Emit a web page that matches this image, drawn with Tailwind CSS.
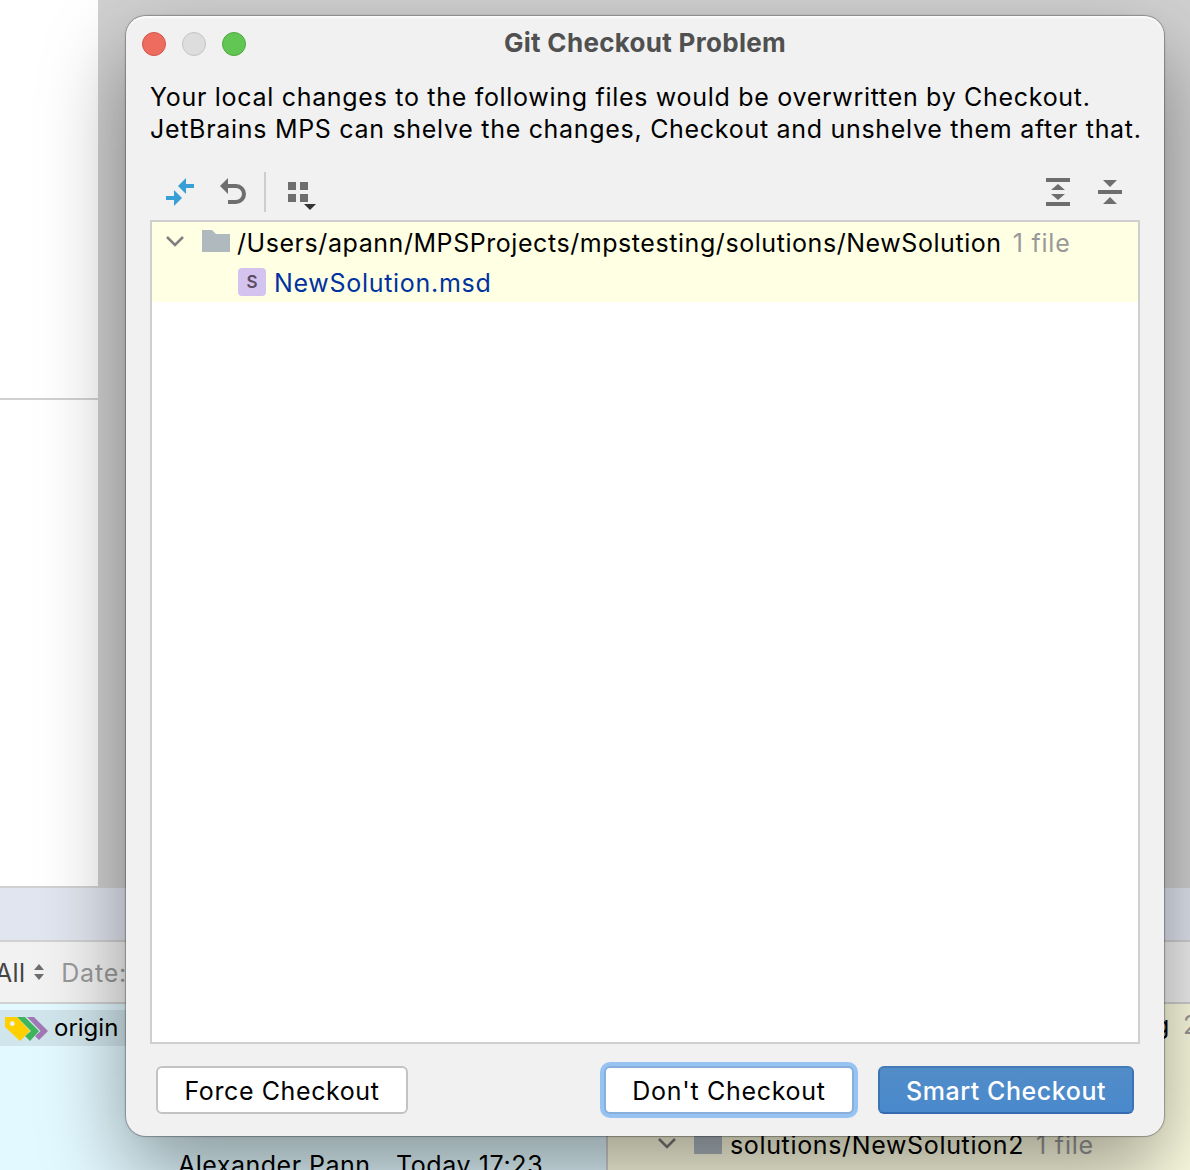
<!DOCTYPE html>
<html lang="en">
<head>
<meta charset="utf-8">
<title>Git Checkout Problem</title>
<script src="https://cdn.jsdelivr.net/npm/@tailwindcss/browser@4"></script>
</head>
<body class="relative h-[1170px] w-[1190px] overflow-hidden bg-[#d1d1d1] font-[Inter,sans-serif] text-[25px] leading-8 whitespace-nowrap text-black">
  <!-- IDE window behind the dialog -->
  <div class="flex h-[1170px] flex-col">
    <div class="flex h-[886px] w-[98px] shrink-0 flex-col gap-[2px] bg-[#d1d1d1]">
      <div class="h-[398px] bg-white"></div>
      <div class="flex-1 bg-white"></div>
    </div>
    <div class="h-[54px] shrink-0 border-t-2 border-[#d1d1d1] bg-[#e1e5ef]"></div>
    <div class="flex h-16 shrink-0 items-center border-y-2 border-[#d1d1d1] bg-[#f2f2f2] pt-[2px]">
      <span class="-ml-[5px] tracking-[0.3px] text-[#444]">All</span>
      <svg class="mb-[2px] ml-[9px] h-4 w-[10px]" viewBox="0 0 10 16" fill="#6e6e6e"><path d="M5 0l5 6H0zM0 10h10l-5 6z"/></svg>
      <span class="ml-[17px] tracking-[0.8px] text-[#999]">Date:</span>
    </div>
    <div class="flex flex-1">
      <div class="w-[606px] bg-[#e2f9ff] pt-[6px]">
        <div class="flex h-9 items-center bg-[#d1e6ec]">
          <svg class="mt-px ml-1 h-[26px] w-11" viewBox="0 0 44 26">
            <path d="M23 1h7l14 14-9 9-4-4 5.500-5z" fill="#a177b5"/>
            <path d="M13 1h8l14 14-9 10-5-5 6-5z" fill="#3cb55c"/>
            <path d="M1 1h12l13 14-10 10L1 11z" fill="#ffcf00"/>
            <circle cx="8.300" cy="7.700" r="2.400" fill="#e8f2f0"/>
          </svg>
          <span class="ml-[6px] text-[24px]">origin</span>
        </div>
        <div class="mt-[103px] flex pl-[178px]">
          <span class="w-[218px] tracking-[0.5px]">Alexander Pann</span>
          <span class="tracking-[0.6px]">Today 17:23</span>
        </div>
      </div>
      <div class="flex-1 border-l-2 border-[#d1d1d1] bg-[#ffffe4] pt-px">
        <div class="flex h-10 items-center justify-end gap-[13px] tracking-[0.65px]"><span>mpstesting</span><span class="w-[7px] text-[#999]">2 files</span></div>
        <div class="mt-20 flex h-10 items-center pl-[49px]">
          <svg class="mb-[5px] h-3 w-5" viewBox="0 0 20 12" fill="none" stroke="#7a7a7a" stroke-width="2.500"><path d="M2 2l8 8 8-8"/></svg>
          <svg class="mb-1 ml-[17px] h-[22px] w-7" viewBox="0 0 28 22" fill="#aeb9c0"><path d="M0 0h10l4 4h14v18H0z"/></svg>
          <span class="ml-2 tracking-[0.65px]">solutions/NewSolution2</span>
          <span class="ml-3 tracking-[0.8px] text-[#999]">1 file</span>
        </div>
      </div>
    </div>
  </div>

  <!-- Modal dialog -->
  <div class="absolute top-4 left-[126px] flex h-[1120px] w-[1038px] flex-col rounded-[20px] bg-[#f1f1f1] px-6 shadow-[inset_0_2px_1px_rgba(255,255,255,0.7),0_0_0_1px_rgba(0,0,0,0.2),0_0_3px_rgba(0,0,0,0.25),0_36px_84px_rgba(0,0,0,0.4)]">
    <div class="-mx-2 grid h-14 shrink-0 grid-cols-[120px_1fr_120px] items-center">
      <div class="flex gap-4">
        <div class="size-6 rounded-full border border-[#d45448] bg-[#ed6b5f]"></div>
        <div class="size-6 rounded-full border border-[#c4c4c4] bg-[#dddddd]"></div>
        <div class="size-6 rounded-full border border-[#50a83f] bg-[#62c655]"></div>
      </div>
      <div class="pb-[2px] text-center text-[26px] font-bold tracking-[0.3px] text-[#505050]">Git Checkout Problem</div>
    </div>
    <div class="mt-[9px] shrink-0 tracking-[0.7px]">Your local changes to the following files would be overwritten by Checkout.<br>JetBrains MPS can shelve the changes, Checkout and unshelve them after that.</div>
    <div class="mt-[25px] flex h-[50px] shrink-0 items-center pb-[6px]">
      <svg class="ml-4 h-7 w-7" viewBox="0 0 28 28" fill="#389fd6"><path d="M20 0v6h8v4h-8v6l-8-8zM0 18h8v-6l8 8-8 8v-6H0z"/></svg>
      <svg class="ml-[26px] h-7 w-[26px]" viewBox="0 0 26 28"><path d="M8 0v16L0 8z" fill="#6e6e6e"/><path d="M7 8h9a8 8 0 0 1 0 16H8" fill="none" stroke="#6e6e6e" stroke-width="4"/></svg>
      <div class="ml-[18px] h-10 w-[2px] bg-[#cdcdcd]"></div>
      <svg class="mt-[7px] ml-[22px] h-7 w-7" viewBox="0 0 28 28" fill="#6e6e6e"><path d="M0 0h8v8H0zM12 0h8v8h-8zM0 12h8v8H0zM12 12h8v8h-8z"/><path d="M16 22h12l-6 6z" fill="#333"/></svg>
      <svg class="ml-auto h-7 w-6" viewBox="0 0 24 28" fill="#6e6e6e"><path d="M0 0h24v4H0zM0 24h24v4H0zM12 6l7 6H5zM5 16h14l-7 6z"/></svg>
      <svg class="mr-[18px] ml-7 h-6 w-6" viewBox="0 0 24 24" fill="#6e6e6e"><path d="M0 10h24v4H0zM5 0h14l-7 7zM12 17l7 7H5z"/></svg>
    </div>
    <div class="h-[824px] w-[990px] shrink-0 border-2 border-[#cfcfcf] bg-white">
      <div class="bg-[#ffffe4]">
        <div class="flex h-10 items-center pl-[13px]">
          <svg class="mb-[2px] h-3 w-5" viewBox="0 0 20 12" fill="none" stroke="#7f7f7f" stroke-width="2.500"><path d="M2 2l8 8 8-8"/></svg>
          <svg class="mb-[2px] ml-[17px] h-[22px] w-7" viewBox="0 0 28 22" fill="#afb9be"><path d="M0 0h10l4 4h14v18H0z"/></svg>
          <span class="mt-[2px] ml-[7px] tracking-[0.56px]">/Users/apann/MPSProjects/mpstesting/solutions/NewSolution</span>
          <span class="mt-[2px] ml-[11px] tracking-[0.8px] text-[#999]">1 file</span>
        </div>
        <div class="flex h-10 items-center pl-[86px]">
          <div class="flex size-7 items-center justify-center rounded bg-[#d4c3ef] text-[17px] font-semibold text-[#5b4d63]">S</div>
          <span class="mt-[2px] ml-2 tracking-[0.7px] text-[#0032a0]">NewSolution.msd</span>
        </div>
      </div>
    </div>
    <div class="mt-[22px] flex h-12 shrink-0 items-center px-[6px]">
      <button class="h-12 w-[252px] rounded-md border-2 border-[#c3c3c3] bg-white pt-[2px] tracking-[0.6px]">Force Checkout</button>
      <button class="mr-6 ml-auto h-12 w-[250px] rounded-md border-2 border-[#87afda] bg-white pt-[2px] tracking-[0.7px] shadow-[0_0_0_4px_#97c3f3]">Don't Checkout</button>
      <button class="h-12 w-[256px] rounded-md border-2 border-x-[#3c73b5] border-t-[#437bb9] border-b-[#346bb0] bg-linear-to-b from-[#528cc8] to-[#4989cc] pt-[2px] font-medium tracking-[0.55px] text-white">Smart Checkout</button>
    </div>
  </div>
</body>
</html>
